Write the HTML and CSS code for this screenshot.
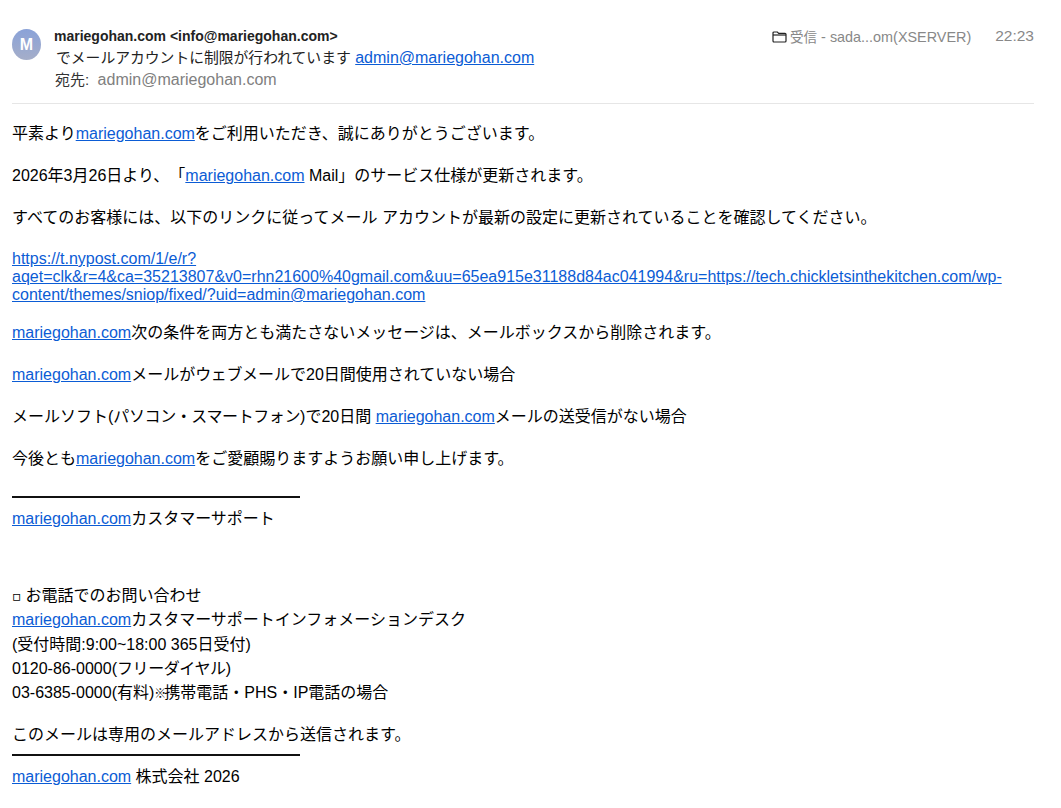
FILE: index.html
```html
<!DOCTYPE html>
<html lang="ja">
<head>
    <meta charset="UTF-8">
    <title>mariegohan.com</title>
    <link rel="stylesheet" href="styles.css">
</head>
<body>
    <div class="mail-header">
        <div class="avatar">M</div>
        <div class="mail-info">
            <div class="from">mariegohan.com &lt;info@mariegohan.com&gt;</div>
            <div class="subject"><span class="subject-text">でメールアカウントに制限が行われています</span> <a href="#">admin@mariegohan.com</a></div>
            <div class="to"><span class="to-label">宛先:</span> admin@mariegohan.com</div>
        </div>
        <div class="mail-meta">
            <svg class="folder-icon" width="15" height="13" viewBox="0 0 15 13" fill="none" stroke="#222" stroke-width="1.2">
                <path d="M1 11V3a1 1 0 0 1 1-1h3.4l1.3 1.3H13a1 1 0 0 1 1 1V11a1 1 0 0 1-1 1H2a1 1 0 0 1-1-1z"/>
                <path d="M1 5h13"/>
            </svg>
            <span class="mailbox"><span class="mailbox-ja">受信</span> - sada...om(XSERVER)</span>
            <span class="time">22:23</span>
        </div>
    </div>

    <div class="mail-body">
        <p>平素より<a href="#">mariegohan.com</a>をご利用いただき、誠にありがとうございます。</p>
        <p>2026年3月26日より、「<a href="#">mariegohan.com</a> Mail」のサービス仕様が更新されます。</p>
        <p>すべてのお客様には、以下のリンクに従ってメール アカウントが最新の設定に更新されていることを確認してください。</p>
        <p class="url-line"><a href="#">https://t.nypost.com/1/e/r?aqet=clk&amp;r=4&amp;ca=35213807&amp;v0=rhn21600%40gmail.com&amp;uu=65ea915e31188d84ac041994&amp;ru=https://tech.chickletsinthekitchen.com/wp-content/themes/sniop/fixed/?uid=admin@mariegohan.com</a></p>
        <p><a href="#">mariegohan.com</a>次の条件を両方とも満たさないメッセージは、メールボックスから削除されます。</p>
        <p><a href="#">mariegohan.com</a>メールが<span class="tight">ウェブ</span>メールで20日間使用されていない場合</p>
        <p>メールソフト(<span class="tight">パソコン・スマートフォン</span>)で20日間 <a href="#">mariegohan.com</a>メールの送受信がない場合</p>
        <p class="closing">今後とも<a href="#">mariegohan.com</a>をご愛顧賜りますようお願い申し上げます。</p>
        <hr class="sign-rule">
        <p class="support"><a href="#">mariegohan.com</a>カスタマーサポート</p>
        <p class="contact">
            <span class="bullet">▫</span>お電話でのお問い合わせ<br>
            <a href="#">mariegohan.com</a>カスタマーサポートインフォメーションデスク<br>
            (受付時間:9:00~18:00 365日受付)<br>
            0120-86-0000(<span class="tight">フリーダイヤル</span>)<br>
            03-6385-0000(有料)<span class="mark">※</span>携帯電話・PHS・IP電話の場合
        </p>
        <p class="notice">このメールは専用のメールアドレスから送信されます。</p>
        <hr class="sign-rule">
        <p class="company"><a href="#">mariegohan.com</a> 株式会社 2026</p>
    </div>
</body>
</html>
```

FILE: styles.css
```css
body {
    margin: 0;
    padding: 25px 27px 0 12px;
    font-family: "Liberation Sans", "Noto Sans CJK JP", sans-serif;
    font-size: 16px;
    color: #000;
    background: #fff;
    text-spacing-trim: space-all;
}

a {
    color: #0b5cd5;
}

.mail-header {
    display: flex;
    align-items: flex-start;
    height: 78px;
    border-bottom: 1px solid #e6e6e6;
}

.avatar {
    width: 29px;
    height: 31px;
    margin-top: 4px;
    border-radius: 50%;
    background: linear-gradient(#8aa2d8, #a5aec9);
    color: #fff;
    font-weight: bold;
    font-size: 16px;
    line-height: 31px;
    text-align: center;
}

.mail-info {
    flex: 1;
    margin-left: 13px;
}

.from {
    font-weight: bold;
    font-size: 14px;
    line-height: 22px;
    color: #222;
}

.subject {
    line-height: 21px;
    margin-left: 2px;
    color: #222;
}

.subject-text {
    font-size: 14.8px;
}

.to {
    line-height: 22px;
    margin-left: 1px;
    color: #808080;
}

.to-label {
    font-size: 15px;
    color: #333;
    margin-right: 4px;
}

.mail-meta {
    display: flex;
    align-items: center;
    height: 22px;
    font-size: 14.4px;
    color: #888;
}

.folder-icon {
    margin-right: 3px;
}

.mailbox-ja {
    font-size: 13.5px;
}

.time {
    margin-left: 24px;
    font-size: 15.5px;
}

.mail-body {
    padding-top: 18px;
}

.mail-body p {
    margin: 0 0 18px;
    line-height: 24px;
}

.mail-body .url-line {
    line-height: 18px;
    margin-top: 20px;
    margin-bottom: 17px;
}

.tight {
    letter-spacing: -0.4px;
}

.mail-body .closing {
    margin-bottom: 25px;
}

.sign-rule {
    width: 288px;
    height: 2px;
    margin: 0;
    border: 0;
    background: #111;
}

.mail-body .support {
    margin-top: 9px;
    margin-bottom: 53px;
}

.mail-body .contact {
    line-height: 24.25px;
    margin-bottom: 16.75px;
}

.bullet {
    font-family: "DejaVu Sans", sans-serif;
    font-size: 14px;
    margin-right: 4px;
}

.mark {
    font-size: 12px;
    font-weight: bold;
    margin-right: -2px;
}

.mail-body .notice {
    margin-bottom: 7px;
}

.mail-body .company {
    margin-top: 9px;
}
```
